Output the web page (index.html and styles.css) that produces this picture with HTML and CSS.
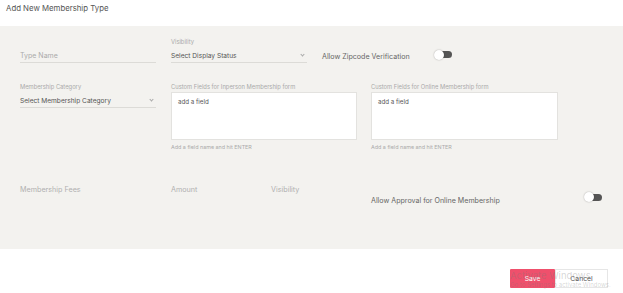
FILE: index.html
```html
<!DOCTYPE html>
<html lang="en">
<head>
    <meta charset="UTF-8">
    <meta name="viewport" content="width=device-width, initial-scale=1.0">
    <title>Add New Membership Type</title>
    <link rel="stylesheet" href="styles.css">
</head>
<body>
    <div class="modal-head">Add New Membership Type</div>

    <div class="modal-body">
        <div class="row row-one">
            <div class="field">
                <div class="label"></div>
                <div class="input placeholder">Type Name</div>
            </div>
            <div class="field">
                <div class="label">Visibility</div>
                <div class="input select">Select Display Status<span class="chev"></span></div>
            </div>
            <div class="switch-line">
                <span class="switch-text">Allow Zipcode Verification</span>
                <span class="toggle"><span class="knob"></span></span>
            </div>
        </div>

        <div class="row row-two">
            <div class="field">
                <div class="label">Membership Category</div>
                <div class="input select">Select Membership Category<span class="chev"></span></div>
            </div>
            <div class="area-field">
                <div class="label">Custom Fields for Inperson Membership form</div>
                <div class="area">add a field</div>
                <div class="hint">Add a field name and hit ENTER</div>
            </div>
            <div class="area-field wide">
                <div class="label">Custom Fields for Online Membership form</div>
                <div class="area">add a field</div>
                <div class="hint">Add a field name and hit ENTER</div>
            </div>
        </div>

        <div class="row row-three">
            <div class="fees">
                <span class="col-fees">Membership Fees</span>
                <span class="col-amount">Amount</span>
                <span class="col-vis">Visibility</span>
            </div>
            <div class="switch-line approval">
                <span class="switch-text">Allow Approval for Online Membership</span>
                <span class="toggle"><span class="knob"></span></span>
            </div>
        </div>
    </div>

    <div class="modal-foot">
        <button class="btn btn-save">Save</button>
        <button class="btn btn-cancel">Cancel</button>
    </div>

    <div class="watermark">
        <div class="wm-big">Activate Windows</div>
        <div class="wm-small">Go to Settings to activate Windows.</div>
    </div>
</body>
</html>
```

FILE: styles.css
```css
*{
    margin: 0;
    padding: 0;
    box-sizing: border-box;
}

body{
    width: 623px;
    height: 293px;
    background: #fff;
    font-family: Inter, "Noto Sans", sans-serif;
    color: #555;
    position: relative;
    overflow: hidden;
}

.modal-head{
    height: 26px;
    padding: 4px 0 0 6px;
    font-size: 7.8px;
    line-height: 9px;
    color: #555;
}

.modal-body{
    height: 223px;
    background: #f3f2ef;
    padding: 12px 0 0 20px;
}

.row{
    display: flex;
}

.field{
    width: 136px;
    margin-right: 15px;
}

.label{
    height: 8px;
    font-size: 5.8px;
    line-height: 8px;
    color: #aaa;
    white-space: nowrap;
}

.input{
    position: relative;
    height: 14px;
    margin-top: 3px;
    padding-top: 1px;
    border-bottom: 1px solid #dcdbd7;
    font-size: 6.6px;
    line-height: 12px;
    white-space: nowrap;
}

.placeholder{
    color: #aaa;
    font-size: 7px;
}

.select{
    color: #555;
}

.chev{
    position: absolute;
    right: 3px;
    top: 4px;
    width: 3px;
    height: 3px;
    border-right: 0.7px solid #aaa;
    border-bottom: 0.7px solid #aaa;
    transform: rotate(45deg);
}

.switch-line{
    display: flex;
    align-items: center;
    margin-top: 11px;
    height: 15px;
}

.switch-text{
    font-size: 7.1px;
    color: #666;
    width: 112px;
    white-space: nowrap;
}

.toggle{
    position: relative;
    display: inline-block;
    width: 18px;
    height: 7px;
    margin-top: -4px;
}

.toggle::after{
    content: "";
    position: absolute;
    left: 4px;
    top: 0;
    width: 14px;
    height: 7px;
    border-radius: 4px;
    background: #555;
}

.knob{
    position: absolute;
    left: 0;
    top: -1.5px;
    width: 10px;
    height: 10px;
    border-radius: 50%;
    background: #fff;
    box-shadow: 0 0 1.5px rgba(0,0,0,0.35);
    z-index: 1;
}

.row-two{
    margin-top: 19px;
}

.area-field{
    width: 186px;
    margin-right: 14px;
}

.area-field.wide{
    width: 187px;
}

.area{
    height: 48px;
    margin-top: 1px;
    background: #fff;
    border: 1px solid #e3e2df;
    padding: 4px 6px;
    font-size: 6.2px;
    line-height: 10px;
    color: #555;
}

.hint{
    margin-top: 3px;
    font-size: 5.4px;
    line-height: 8px;
    color: #aaa;
}

.row-three{
    margin-top: 35px;
}

.fees{
    display: flex;
    width: 351px;
    font-size: 7.2px;
    line-height: 8px;
    color: #b0b0b0;
}

.col-fees{
    width: 151px;
}

.col-amount{
    width: 100px;
}

.approval{
    margin-top: 10px;
    height: 8px;
}

.approval .switch-text{
    width: 213px;
}

.approval .toggle{
    margin-top: -6px;
}

.modal-foot{
    display: flex;
    justify-content: flex-end;
    padding: 20px 15px 0 0;
}

.btn{
    height: 19px;
    font-family: Inter, "Noto Sans", sans-serif;
    font-size: 6.8px;
    cursor: pointer;
}

.btn-save{
    width: 45px;
    background: #ef506c;
    border: none;
    color: #fff;
    border-radius: 1px;
}

.btn-cancel{
    width: 53px;
    background: #fff;
    border: 1px solid #e6e6e6;
    color: #555;
}

.watermark{
    position: absolute;
    left: 510px;
    top: 270px;
    color: rgba(120,120,120,0.3);
    white-space: nowrap;
    pointer-events: none;
}

.wm-big{
    font-size: 9.5px;
    line-height: 11px;
}

.wm-small{
    font-size: 6px;
    line-height: 8px;
}
```
